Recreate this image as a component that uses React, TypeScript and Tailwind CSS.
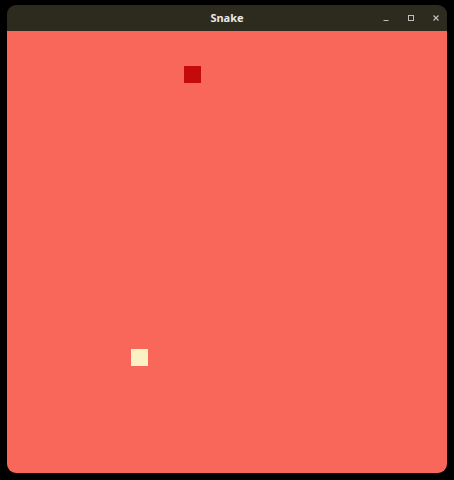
export default function App() {
  return (
    <div className="w-[454px] h-[480px] bg-black pt-[5px] pl-[7px]">
      <div className="w-[440px] h-[468px] flex flex-col rounded-[9px] overflow-hidden">
        <div className="h-[26px] bg-[#2d2b1e] flex items-center relative">
          <div
            className="flex-1 text-center text-[11px] font-bold text-[#e8e8e8]"
            style={{ fontFamily: '"Noto Sans", sans-serif' }}
          >
            Snake
          </div>
          <div className="absolute right-[5px] top-0 h-full flex items-center gap-[13px] text-[#bdbdbd]">
            <svg width="12" height="12" viewBox="0 0 12 12">
              <path d="M3.5 8.5h5" stroke="currentColor" strokeWidth="1" />
            </svg>
            <svg width="12" height="12" viewBox="0 0 12 12">
              <rect x="3.5" y="3.5" width="5" height="5" fill="none" stroke="currentColor" strokeWidth="1" />
            </svg>
            <svg width="12" height="12" viewBox="0 0 12 12">
              <path d="M3.5 3.5l5 5M8.5 3.5l-5 5" stroke="currentColor" strokeWidth="1.2" />
            </svg>
          </div>
        </div>
        <div className="flex-1 bg-[#f8675a] relative">
          <div className="absolute left-[177px] top-[35px] w-[17px] h-[17px] bg-[#c40a0a]" />
          <div className="absolute left-[124px] top-[318px] w-[17px] h-[17px] bg-[#fbf1c4]" />
        </div>
      </div>
    </div>
  );
}
